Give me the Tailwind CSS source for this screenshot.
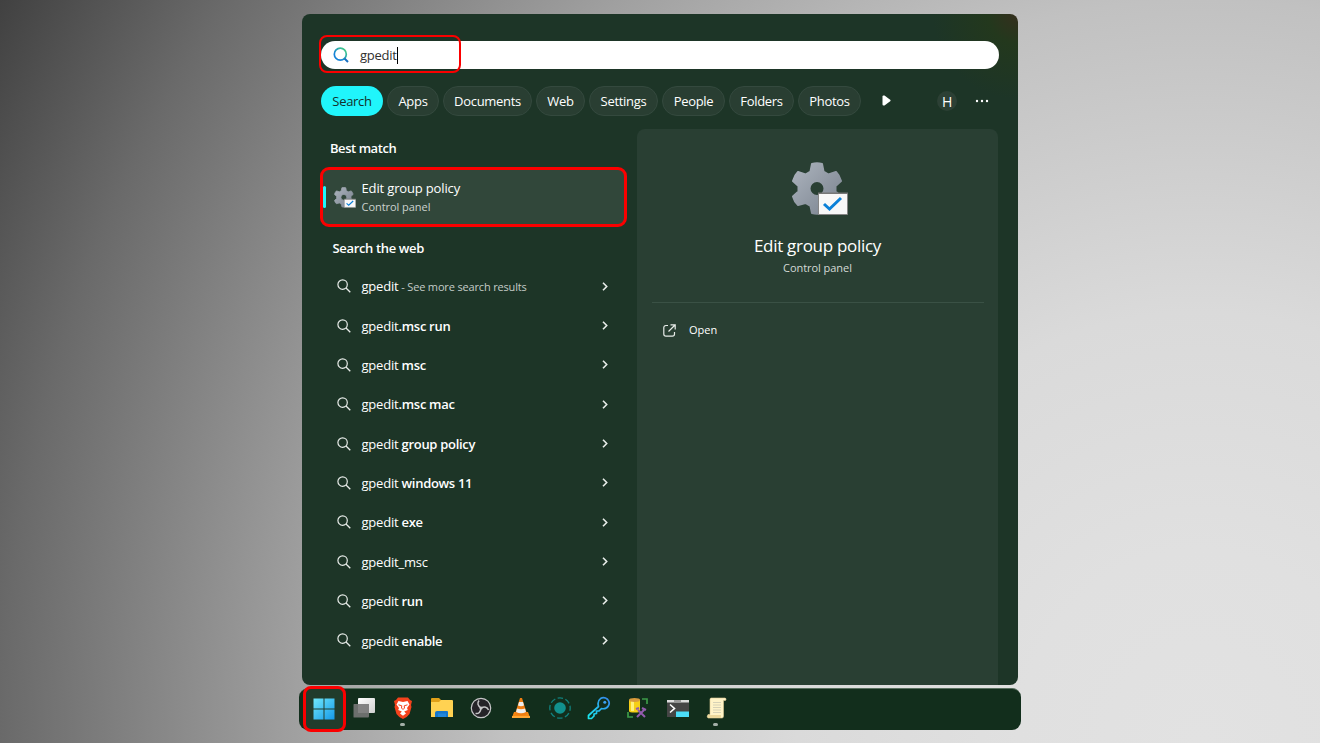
<!DOCTYPE html>
<html lang="en">
<head>
<meta charset="utf-8">
<title>Search</title>
<script src="https://cdn.jsdelivr.net/npm/@tailwindcss/browser@4"></script>
</head>
<body class="relative h-[743px] w-[1320px] overflow-hidden bg-[radial-gradient(1392px_1486px_at_1200px_743px,#e2e2e2_0%,#e0e0e0_13%,#dadada_29%,#c1c1c1_50%,#a0a0a0_65%,#6a6a6a_86%,#404040_100%)] font-['Open_Sans','Noto_Sans',sans-serif] text-white">
<svg class="absolute size-0">
  <defs>
    <linearGradient id="gearFill" x1="0" y1="0" x2="1" y2="1"><stop offset="0" stop-color="#adb4be"/><stop offset="1" stop-color="#78818d"/></linearGradient>
    <symbol id="gear" viewBox="0 0 56 54">
      <path fill="url(#gearFill)" fill-rule="evenodd" stroke="url(#gearFill)" stroke-width="2" stroke-linejoin="round" d="M20 2Q25 0.500 30 2L31.500 9.500L36.500 12.500L44 10Q47.500 13.500 49 19L43.500 24V29.500L49 34.500Q47.500 40 44 43L36.500 41L31.500 44L30 51Q25 52.500 20 51L18.500 44L13.500 41L6 43Q2.500 40 1 34.500L6.500 29.500V24L1 19Q2.500 13.500 6 10L13.500 12.500L18.500 9.500ZM25 19A7.500 7.500 0 1 0 25 34A7.500 7.500 0 1 0 25 19Z"/>
      <path fill="#f8f8f8" stroke="#858585" d="M26.500 31.500H55.500V52.500H26.500Z"/>
      <path stroke="#777" stroke-width="1.500" d="M26 31.200H56"/>
      <path fill="none" stroke="#0b80d8" stroke-width="3" d="M32 42L37.500 47L49 36"/>
    </symbol>
    <symbol id="mag" viewBox="0 0 14 14"><circle cx="5.600" cy="5.600" r="4.700" fill="none" stroke="currentColor" stroke-width="1.200"/><path d="M9 9L13.300 13.300" stroke="currentColor" stroke-width="1.300"/></symbol>
    <symbol id="chev" viewBox="0 0 6 9"><path d="M1 .8L4.700 4.500L1 8.200" fill="none" stroke="currentColor" stroke-width="1.600"/></symbol>
  </defs>
</svg>

<main class="absolute left-[302px] top-[14px] h-[671px] w-[716px] overflow-hidden rounded-lg bg-[radial-gradient(circle_at_100%_0%,#352f1d_0,#23381d_30px,#1d3527_85px)]">
  <div class="ml-[19px] mt-[27px] flex h-[28px] w-[678px] items-center rounded-full bg-white pl-[12px] text-[#303030]">
    <svg class="size-4" viewBox="0 0 16 16" fill="none"><defs><linearGradient id="sg" x1="0" y1="1" x2="1" y2="0"><stop offset=".3" stop-color="#1683d8"/><stop offset="1" stop-color="#48d778"/></linearGradient></defs><circle cx="7.300" cy="7.200" r="6" stroke="url(#sg)" stroke-width="1.700"/><path d="M11.500 11.500L15 15" stroke="#176fc1" stroke-width="2"/></svg>
    <span class="ml-[11px] text-[13px] leading-5 tracking-[-0.25px]">gpedit</span><span class="h-[17px] w-px bg-black"></span>
  </div>

  <nav class="ml-[19px] mt-[17px] flex h-[30px] items-center gap-1 text-[13px] tracking-[-0.3px] *:flex *:h-[30px] *:shrink-0 *:items-center *:justify-center *:rounded-full">
    <span class="w-[62px] bg-[#20f5fb] pt-px text-[#14302c]">Search</span>
    <span class="w-[52px] border border-[#34493e] bg-[#293e32] pt-px">Apps</span>
    <span class="w-[89px] border border-[#34493e] bg-[#293e32] pt-px">Documents</span>
    <span class="w-[49px] border border-[#34493e] bg-[#293e32] pt-px">Web</span>
    <span class="w-[69px] border border-[#34493e] bg-[#293e32] pt-px">Settings</span>
    <span class="w-[63px] border border-[#34493e] bg-[#293e32] pt-px">People</span>
    <span class="w-[65px] border border-[#34493e] bg-[#293e32] pt-px">Folders</span>
    <span class="w-[63px] border border-[#34493e] bg-[#293e32] pt-px">Photos</span>
    <svg class="ml-[17px] w-[9px]" viewBox="0 0 9 30"><path d="M1.500 9.500Q.5 9.500 .5 10.500V18.500Q.5 19.500 1.500 19.500H2.500L8.500 15.100V13.900L2.500 9.500Z" fill="#fff"/></svg>
    <span class="ml-[42px] !h-5 w-5 bg-[#2c4035] text-[14px]">H</span>
    <svg class="ml-[14px] w-[14px]" viewBox="0 0 14 30" fill="#fff"><circle cx="2" cy="15" r="1.200"/><circle cx="7" cy="15" r="1.200"/><circle cx="12" cy="15" r="1.200"/></svg>
  </nav>

  <div class="mt-[13px] flex h-[556px]">
    <section class="w-[335px] shrink-0 pl-[18px]">
      <h2 class="pl-[10px] pt-[9px] text-[13px] font-semibold leading-5 tracking-[-0.45px]">Best match</h2>
      <div class="mt-[9px] flex h-[60px] w-[307px] items-center rounded-[9px] border-3 border-[#fb0000] bg-[#31473a]">
        <i class="h-[22px] w-[3px] rounded-full bg-[#20f5fb]"></i>
        <svg class="ml-[8px] h-[21px] w-[22px]"><use href="#gear"/></svg>
        <div class="ml-[5.500px] pb-px"><div class="text-[13px] leading-[19px] tracking-[-0.15px]">Edit group policy</div><div class="text-[11px] leading-[17px] tracking-[-0.05px] text-[#cbd2ce]">Control panel</div></div>
      </div>
      <h2 class="mb-[9px] ml-[12.500px] mt-[11px] text-[13px] font-semibold leading-5 tracking-[-0.35px]">Search the web</h2>
      <ul id="results" class="text-[13px] tracking-[-0.3px]"></ul>
      <template id="row"><li class="flex h-[39.350px] items-center pl-[17px]"><svg class="mb-px size-[14px] text-[#e8ece9]"><use href="#mag"/></svg><span class="ml-[10.500px] w-[240.500px] whitespace-pre pt-px"><span class="tracking-[-0.2px]"></span><b class="font-semibold"></b><small class="text-[11px] tracking-[-0.16px] text-[#c4ccc7]"></small></span><svg class="mb-px h-[9px] w-[6px] text-[#e8ece9]"><use href="#chev"/></svg></li></template>
    </section>
    <aside class="flex w-[361px] flex-col items-center rounded-t-lg bg-[#293f33]">
      <svg class="ml-[5px] mt-[33px] h-[54px] w-[56px]"><use href="#gear"/></svg>
      <h1 class="mt-[18px] text-[17px] leading-6 tracking-[-0.3px]">Edit group policy</h1>
      <p class="mt-[2px] text-[11px] leading-4 tracking-[-0.05px] text-[#d4dad6]">Control panel</p>
      <div class="mt-[26px] h-px w-[332px] bg-[#3a5145]"></div>
      <div class="mt-[17px] flex w-[309px] items-center">
        <svg class="size-[13px]" viewBox="0 0 13 13" fill="none" stroke="#e8ece9" stroke-width="1.200"><path d="M5 1.500H3Q.8 1.500 .8 3.700V10Q.8 12.200 3 12.200H9.300Q11.500 12.200 11.500 10V8M7.500 .8H12.200V5.500M12 1L5.500 7.500"/></svg>
        <span class="ml-[13px] text-[11px] leading-5">Open</span>
      </div>
    </aside>
  </div>
</main>

<footer class="absolute left-[299px] top-[688px] flex h-[42px] w-[722px] items-center rounded-[9px] border-t border-[#58705f] bg-[#122e1c] pl-[4px]">
  <div class="-mt-px flex h-[46px] w-[43px] shrink-0 items-center justify-center rounded-lg border-3 border-[#fb0000] bg-[#213c2c] pr-[2px]">
    <svg class="size-[22px]" viewBox="0 0 22 22"><defs><linearGradient id="win" x1="0" y1="0" x2="1" y2="1"><stop stop-color="#70e8fb"/><stop offset="1" stop-color="#1599e8"/></linearGradient></defs><path fill="url(#win)" d="M.5 .5H10.500V10.500H.5ZM11.500 .5H21.500V10.500H11.500ZM.5 11.500H10.500V21.500H.5ZM11.500 11.500H21.500V21.500H11.500Z"/></svg>
  </div>
  <div class="mb-[3px] ml-[5.500px] flex gap-[15.250px] *:size-6 *:shrink-0">
    <svg viewBox="0 0 24 24"><defs><linearGradient id="tv" x1="0" y1="0" x2="1" y2="1"><stop stop-color="#fff"/><stop offset="1" stop-color="#d0d0d0"/></linearGradient></defs><path fill="url(#tv)" d="M7 2H22Q23 2 23 3V16Q23 17 22 17H6V3Q6 2 7 2Z"/><path fill="#777" fill-opacity=".9" d="M2 8H17V20Q17 21.500 16 21.500H2Q1.500 21.500 1.500 21V9Q1.500 8 2 8Z"/></svg>
    <svg viewBox="0 0 24 24"><path fill="#f5421c" d="M7 1.500H17L19 4L21 5L20 9L20.500 11L18.500 18Q17 20.500 12 23Q7 20.500 5.500 18L3.500 11L4 9L3 5L5 4Z"/><path fill="#fff" d="M7.500 5L12 6L16.500 5L18.500 8.500L16 12L16.800 14L13.200 15.500L15 17.500L12 19.800L9 17.500L10.800 15.500L7.200 14L8 12L5.500 8.500Z"/><path stroke="#f5421c" stroke-width="1" fill="none" d="M7.500 8.800L10.800 9.800M16.500 8.800L13.200 9.800M10.800 9.800L10.500 12L12 13.500L13.500 12L13.200 9.800"/></svg>
    <svg viewBox="0 0 24 24"><path fill="#e0a019" d="M2 2H9L11 4V7H1V3Q1 2 2 2Z"/><path fill="#ffd252" d="M1 6H9L11 4H22Q23 4 23 5V21H1Z"/><path fill="#1677cc" d="M7 15H17Q18 15 18 16V21H5V17Q5 15 7 15Z"/><path fill="#3297e8" d="M8 17.500H16V21H8Z" opacity=".5"/></svg>
    <svg viewBox="0 0 24 24"><circle cx="12" cy="12" r="9.700" fill="#252328" stroke="#c6c6c8" stroke-width="1.200"/><g fill="none" stroke="#c6c6c8" stroke-width="1.500"><path d="M10 4.500Q7 8.500 12 12"/><path d="M10 4.500Q7 8.500 12 12" transform="rotate(120 12 12)"/><path d="M10 4.500Q7 8.500 12 12" transform="rotate(240 12 12)"/></g><circle cx="12" cy="12" r="1.600" fill="#c6c6c8"/></svg>
    <svg viewBox="0 0 24 24"><path fill="#f58710" d="M5 16H19L21 21.500H3Z"/><path fill="#ffa634" d="M3 20H21V22H3Z"/><path fill="#ef7d12" d="M11 2H13L18 18Q12 21 6 18Z"/><path fill="#eee" d="M10 6H14L15 9.500Q12 11 9 9.500ZM8 12.500Q12 14 16 12.500L17 16Q12 18.500 7 16Z"/></svg>
    <svg viewBox="0 0 24 24"><circle cx="12" cy="12" r="5.800" fill="#11918e"/><circle cx="12" cy="12" r="10.200" fill="none" stroke="#11807d" stroke-width="1.300" stroke-dasharray="5.500 2.510" stroke-dashoffset="2.700"/></svg>
    <svg viewBox="0 0 24 24"><defs><linearGradient id="key" x1="0" y1="1" x2="1" y2="0"><stop stop-color="#18e9ee"/><stop offset="1" stop-color="#3686ed"/></linearGradient></defs><path fill="none" stroke="url(#key)" stroke-width="1.700" stroke-linejoin="round" d="M11.500 10.500Q10 5 13.500 2.600Q17 .6 20.500 3.200Q23.500 6.500 21.300 10Q19 13.600 14.500 12.500L12 15H9.500V17.500L7 18V20L4.500 22.500H1.500V19.500Z"/><circle cx="17.800" cy="6.200" r="1.500" fill="#3ba0ee"/></svg>
    <svg viewBox="0 0 24 24"><path fill="#f6cf16" d="M3 4H14V15H3Z"/><ellipse cx="8.500" cy="15" rx="5.500" ry="1.500" fill="#f6cf16"/><path fill="#fff07a" d="M5 5H8V15H5Z"/><ellipse cx="8.500" cy="4" rx="5.500" ry="1.900" fill="#d99b3c"/><path fill="none" stroke="#3d9a48" stroke-width="1.700" d="M16 3H21V8M2 16V21H7"/><path fill="none" stroke="#935bae" stroke-width="2" d="M11 21L18 14M12 14L19 21M10 13L13 12M16 12L20 14"/></svg>
    <svg viewBox="0 0 24 24"><path fill="#454545" d="M1 4H23V21H1Z"/><path fill="#ddd" d="M1 4H23V6.500H1Z"/><path fill="#999" d="M8 4H15V6.500H8Z"/><path fill="none" stroke="#fff" stroke-width="1.600" d="M4 8.500L8.500 12.500L4 16.500"/><path fill="#4bddf8" d="M10 15.500H23V21H10Z"/></svg>
    <svg viewBox="0 0 24 24"><path fill="#fff3c7" stroke="#decb96" stroke-width=".6" d="M6 2H20Q22 2.500 20.500 4.500H18.500V20Q18.500 22 17 22H3Q1.500 20.500 3 18.500H5V4Q4.500 2.500 6 2Z"/><path stroke="#d6d1b6" d="M8 6.500H16M8 9H16M8 11.500H16M8 14H16M8 16.500H16"/><path fill="#ecd89c" d="M3 19H16V22H3Q2 21 3 19Z"/></svg>
  </div>
  <i class="absolute left-[101px] top-[34px] h-[3px] w-[5px] rounded-full bg-[#a4afa8]"></i>
  <i class="absolute left-[414px] top-[34px] h-[3px] w-[5px] rounded-full bg-[#a4afa8]"></i>
</footer>
<div class="absolute left-[319px] top-[35px] h-[38px] w-[142px] rounded-lg border-[2.500px] border-[#fb0000]"></div>
<script>
const rows = [['gpedit','',' - See more search results'],['gpedit','.msc run',''],['gpedit',' msc',''],['gpedit','.msc mac',''],['gpedit',' group policy',''],['gpedit',' windows 11',''],['gpedit',' exe',''],['gpedit_msc','',''],['gpedit',' run',''],['gpedit',' enable','']];
for (const r of rows) {
  const n = document.getElementById('row').content.cloneNode(true);
  const t = n.querySelector('li > span').children;
  r.forEach((s, i) => t[i].textContent = s);
  document.getElementById('results').append(n);
}
</script>
</body>
</html>
